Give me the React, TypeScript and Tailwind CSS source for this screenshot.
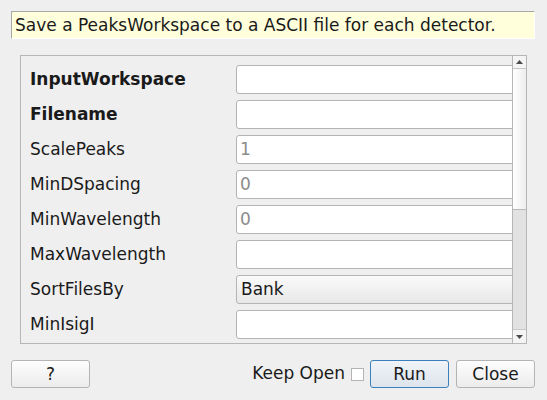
import React from "react";

const rows: { label: string; bold?: boolean; value?: string; placeholder?: boolean; combo?: boolean }[] = [
  { label: "InputWorkspace", bold: true },
  { label: "Filename", bold: true },
  { label: "ScalePeaks", value: "1", placeholder: true },
  { label: "MinDSpacing", value: "0", placeholder: true },
  { label: "MinWavelength", value: "0", placeholder: true },
  { label: "MaxWavelength" },
  { label: "SortFilesBy", value: "Bank", combo: true },
  { label: "MinIsigI" },
];

export default function App() {
  return (
    <div className="w-[547px] h-[400px] bg-[#efefef] font-['DejaVu_Sans',sans-serif] text-[17px] text-[#1a1a1a] overflow-hidden">
      <div className="pt-[11px] pl-[11px]">
        <div className="w-[524px] h-[28px] bg-[#ffffdc] border-t border-l border-[#a8a8a8] border-r-white border-b-white border-r border-b pl-[3px] leading-[26px] whitespace-nowrap">
          Save a PeaksWorkspace to a ASCII file for each detector.
        </div>
      </div>
      <div className="ml-[20px] mt-[16px] w-[507px] h-[289px] border border-[#b6b6b6] flex">
        <div className="flex-1 overflow-hidden pt-[9px] flex flex-col gap-[6px]">
          {rows.map((r) => (
            <div key={r.label} className="flex items-center h-[29px] shrink-0">
              <div className={`w-[215px] shrink-0 pl-[9px] whitespace-nowrap ${r.bold ? "font-bold" : ""}`}>{r.label}</div>
              {r.combo ? (
                <div className="w-[300px] shrink-0 h-[29px] border border-[#b4b4b4] rounded-[3px] bg-gradient-to-b from-[#fafafa] to-[#e8e8e8] pl-[4px] leading-[26px] text-[#1a1a1a]">
                  {r.value}
                </div>
              ) : (
                <div
                  className={`w-[300px] shrink-0 h-[29px] border border-[#b4b4b4] rounded-[3px] bg-white pl-[3px] leading-[27px] ${
                    r.placeholder ? "text-[#8c8c8c]" : ""
                  }`}
                >
                  {r.value ?? ""}
                </div>
              )}
            </div>
          ))}
        </div>
        <div className="w-[14px] shrink-0 border-l border-[#b6b6b6] flex flex-col bg-[#e2e2e2]">
          <div className="h-[13px] shrink-0 border-b border-[#c8c8c8] bg-[#f4f4f4] flex items-center justify-center">
            <svg width="7" height="4" viewBox="0 0 7 4">
              <polygon points="0,4 7,4 3.5,0" fill="#4a4a4a" />
            </svg>
          </div>
          <div className="h-[141px] shrink-0 border-b border-[#b8b8b8] bg-gradient-to-r from-[#ffffff] to-[#ededed]" />
          <div className="flex-1" />
          <div className="h-[14px] shrink-0 border-t border-[#c8c8c8] bg-[#f4f4f4] flex items-center justify-center">
            <svg width="7" height="4" viewBox="0 0 7 4">
              <polygon points="0,0 7,0 3.5,4" fill="#4a4a4a" />
            </svg>
          </div>
        </div>
      </div>
      <div className="mt-[16px] flex items-center h-[28px] pl-[11px] pr-[12px]">
        <button className="w-[79px] h-[28px] border border-[#b4b4b4] rounded-[3px] bg-gradient-to-b from-[#fdfdfd] to-[#ececec] leading-none">
          ?
        </button>
        <div className="flex-1" />
        <span className="whitespace-nowrap">Keep Open</span>
        <div className="w-[13px] h-[13px] border border-[#b4b4b4] bg-white ml-[6px] mr-[6px]" />
        <button className="w-[79px] h-[28px] border border-[#3b7fbb] rounded-[3px] bg-gradient-to-b from-[#f0f4f8] to-[#dde4ec] leading-none">
          Run
        </button>
        <button className="ml-[7px] w-[79px] h-[28px] border border-[#b4b4b4] rounded-[3px] bg-gradient-to-b from-[#fdfdfd] to-[#ececec] leading-none">
          Close
        </button>
      </div>
    </div>
  );
}
